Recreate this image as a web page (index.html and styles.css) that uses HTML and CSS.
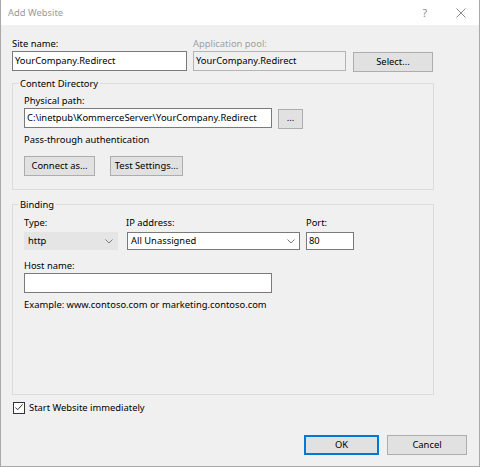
FILE: index.html
```html
<!DOCTYPE html>
<html>
<head>
<meta charset="utf-8">
<title>Add Website</title>
<link rel="stylesheet" href="styles.css">
</head>
<body>
<div class="window">
  <div class="titlebar">
    <span class="title">Add Website</span>
    <span class="help">?</span>
    <svg class="close" width="10" height="10" viewBox="0 0 10 10"><path d="M0.5 0.5 L9.5 9.5 M9.5 0.5 L0.5 9.5" stroke="#8a8a8a" stroke-width="1" fill="none"/></svg>
  </div>
  <div class="content">
    <div class="top-row">
      <div class="field site">
        <div class="label">Site name:</div>
        <div class="input">YourCompany.Redirect</div>
      </div>
      <div class="field pool">
        <div class="label disabled">Application pool:</div>
        <div class="input readonly">YourCompany.Redirect</div>
      </div>
      <div class="btn select">Select...</div>
    </div>

    <fieldset class="group content-dir">
      <legend>Content Directory</legend>
      <div class="group-body cd-body">
        <div class="label">Physical path:</div>
        <div class="path-row">
          <div class="input path">C:\inetpub\KommerceServer\YourCompany.Redirect</div>
          <div class="btn browse">...</div>
        </div>
        <div class="pass">Pass-through authentication</div>
        <div class="btn-row">
          <div class="btn connect">Connect as...</div>
          <div class="btn test">Test Settings...</div>
        </div>
      </div>
    </fieldset>

    <fieldset class="group binding">
      <legend>Binding</legend>
      <div class="group-body bind-body">
        <div class="bind-row">
          <div class="field type">
            <div class="label">Type:</div>
            <div class="combo flat">http<svg class="chev" width="8" height="5" viewBox="0 0 8 5"><path d="M0.5 0.5 L4 4 L7.5 0.5" stroke="#7a7a7a" fill="none"/></svg></div>
          </div>
          <div class="field ip">
            <div class="label">IP address:</div>
            <div class="combo white">All Unassigned<svg class="chev" width="8" height="5" viewBox="0 0 8 5"><path d="M0.5 0.5 L4 4 L7.5 0.5" stroke="#7a7a7a" fill="none"/></svg></div>
          </div>
          <div class="field port">
            <div class="label">Port:</div>
            <div class="input small">80</div>
          </div>
        </div>
        <div class="label host-label">Host name:</div>
        <div class="input host"></div>
        <div class="example">Example: www.contoso.com or marketing.contoso.com</div>
      </div>
    </fieldset>

    <div class="check-row">
      <span class="checkbox"><svg width="11" height="11" viewBox="0 0 11 11"><path d="M1.5 5.5 L4 8 L9.5 2" stroke="#333" stroke-width="1.1" fill="none"/></svg></span>
      <span class="check-label">Start Website immediately</span>
    </div>

    <div class="footer">
      <div class="btn ok">OK</div>
      <div class="btn cancel">Cancel</div>
    </div>
  </div>
</div>
</body>
</html>
```

FILE: styles.css
```css
* { box-sizing: border-box; }
html, body { margin: 0; padding: 0; background: #ffffff; }
body {
  font-family: "Noto Sans", "Open Sans", "DejaVu Sans", sans-serif;
  font-size: 9.4px;
  color: #000;
}
.window {
  width: 480px;
  height: 467px;
  background: #f0f0f0;
  border-left: 1px solid #a8a8a8;
  border-right: 1px solid #a8a8a8;
  border-bottom: 1px solid #a8a8a8;
}
.titlebar {
  height: 25px;
  background: #fff;
  display: flex;
  align-items: center;
  padding-left: 7px;
  padding-right: 13px;
}
.title { color: #9a9a9a; flex: 1; }
.help { color: #8a8a8a; margin-right: 29px; font-size: 10.5px; }
.close { display: block; }

.content { padding: 0 12px 0 11px; }

.label { line-height: 15px; height: 15px; white-space: nowrap; }
.label.disabled { color: #a0a0a0; }

.top-row { display: flex; align-items: flex-end; margin-top: 11px; }
.site { width: 175px; }
.pool { width: 153px; margin-left: 6px; }
.select { width: 80px; margin-left: 7px; margin-bottom: -1px; }

.input {
  height: 20px;
  line-height: 18px;
  background: #fff;
  border: 1px solid #7a7a7a;
  padding: 0 2px;
  white-space: nowrap;
  overflow: hidden;
}
.input.readonly { background: #f0f0f0; border-color: #b4b4b4; }

.btn {
  height: 20px;
  line-height: 18px;
  background: #e1e1e1;
  border: 1px solid #adadad;
  text-align: center;
  white-space: nowrap;
}

fieldset.group {
  width: 422px;
  margin: 0;
  padding: 0;
  border: 1px solid #dcdcdc;
  min-width: 0;
}
fieldset.group legend {
  margin-left: 5px;
  padding: 0 2px;
  line-height: 15px;
  height: 15px;
}
.group-body { padding: 2px 11px 13px 11px; }

.content-dir { margin-top: 5px !important; }
.path-row { display: flex; }
.path { width: 248px; }
.browse { width: 25px; margin-left: 6px; margin-top: 1px; line-height: 16px; }
.pass { line-height: 15px; margin-top: 3px; }
.btn-row { display: flex; margin-top: 9px; }
.connect { width: 71px; }
.test { width: 73px; margin-left: 15px; }

.binding { margin-top: 7px !important; }
.bind-body { padding-top: 3px; padding-bottom: 82px; }
.bind-row { display: flex; }
.bind-row .label { margin-bottom: 2px; }
.type { width: 94px; }
.ip { width: 173px; margin-left: 9px; }
.ip .label { margin-left: -1px; }
.port { width: 48px; margin-left: 6px; }
.combo {
  height: 18px;
  line-height: 16px;
  padding: 0 3px;
  border: 1px solid #7a7a7a;
  background: #fff;
  position: relative;
}
.combo.flat { background: #e5e5e5; border-color: #e5e5e5; }
.chev { position: absolute; right: 4px; top: 6px; }
.input.small { height: 18px; line-height: 16px; }
.host-label { margin-top: 8px; }
.host { width: 248px; }
.example { line-height: 15px; margin-top: 4px; }

.check-row { display: flex; align-items: center; margin-top: 6px; height: 13px; margin-left: 1px; }
.checkbox {
  width: 12px; height: 12px;
  border: 1px solid #333;
  background: #fff;
  display: flex; align-items: center; justify-content: center;
}
.checkbox svg { display: block; }
.check-label { margin-left: 4px; line-height: 15px; }

.footer { display: flex; justify-content: flex-end; margin-top: 21px; }
.ok { width: 75px; border-color: #0078d7; box-shadow: inset 0 0 0 1px #0078d7; }
.cancel { width: 80px; margin-left: 8px; }
```
